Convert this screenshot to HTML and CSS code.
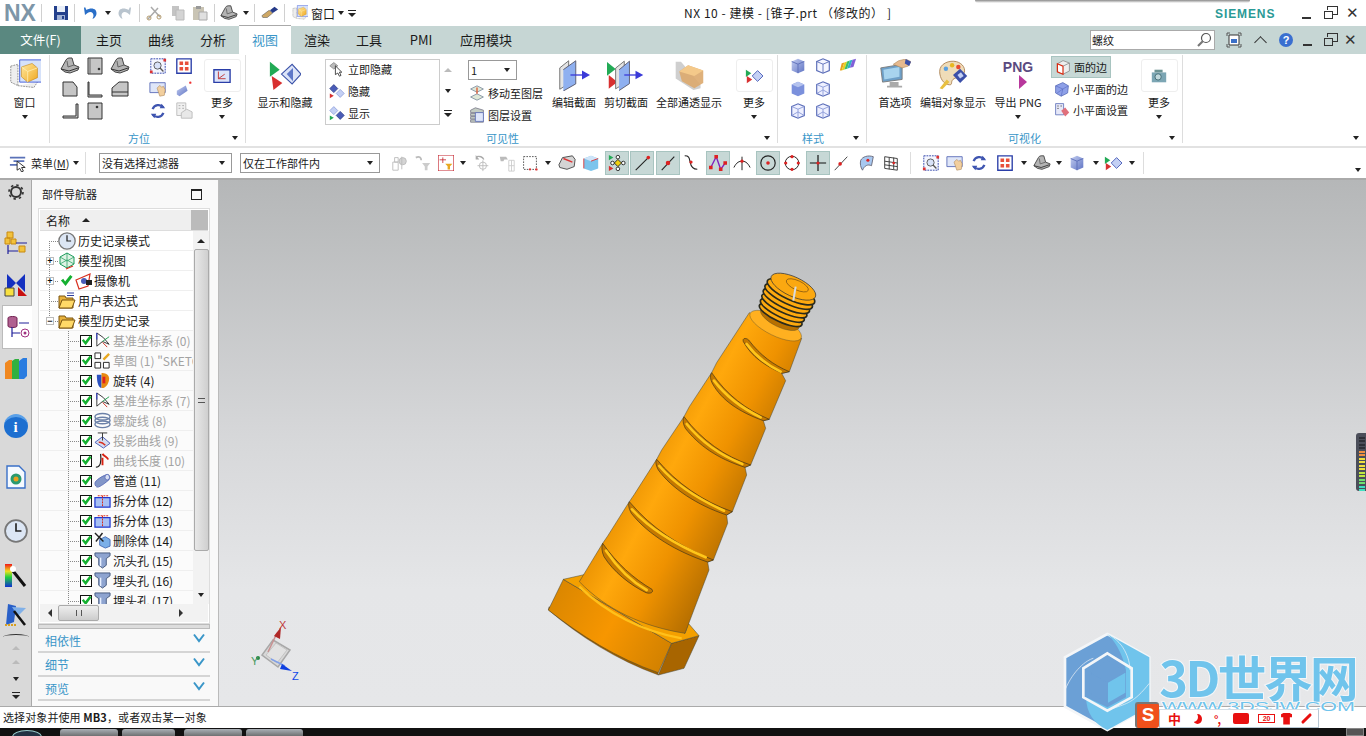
FILE: index.html
```html
<!DOCTYPE html>
<html lang="zh">
<head>
<meta charset="utf-8">
<title>NX 10 - 建模</title>
<link rel="stylesheet" href="styles.css">
</head>
<body>
<svg class="defs" width="0" height="0" aria-hidden="true">
<defs>
<linearGradient id="gb" x1="0" y1="0" x2="1" y2="1"><stop offset="0" stop-color="#c3cdf0"/><stop offset="1" stop-color="#5f74c4"/></linearGradient>
<linearGradient id="gy" x1="0" y1="0" x2="1" y2="1"><stop offset="0" stop-color="#ffe9a0"/><stop offset="1" stop-color="#f0a820"/></linearGradient>
<linearGradient id="rainbow" x1="0" y1="0" x2="0" y2="1"><stop offset="0" stop-color="#f01818"/><stop offset=".3" stop-color="#f0e020"/><stop offset=".55" stop-color="#20d040"/><stop offset="1" stop-color="#1020e0"/></linearGradient>
<symbol id="save" viewBox="0 0 16 16"><path d="M1 1h14v14H1z" fill="#24408c"/><path d="M4 1h8v6H4z" fill="#e8eef8"/><path d="M4 10h8v5H4z" fill="#9fb0d4"/><path d="M9 11h2v3H9z" fill="#24408c"/></symbol>
<symbol id="undo" viewBox="0 0 16 16"><path d="M2 3l1 7 2.500-2c3-2 6-1 6 3l-1 3c4-2 5-6 3-9-2-2-6-2-9 0L3 2z" fill="#2a6fc8"/></symbol>
<symbol id="redo" viewBox="0 0 16 16"><path d="M14 3l-1 7-2.500-2c-3-2-6-1-6 3l1 3c-4-2-5-6-3-9 2-2 6-2 9 0L13 2z" fill="#b9c4ce"/></symbol>
<symbol id="cut" viewBox="0 0 16 16"><path d="M2 14L12 3M5 2l9 10" stroke="#aaa" stroke-width="1.500"/><circle cx="3" cy="13" r="2" fill="none" stroke="#b49c70"/><circle cx="13" cy="12" r="2" fill="none" stroke="#b49c70"/></symbol>
<symbol id="copy" viewBox="0 0 16 16"><path d="M2 1h7v10H2z" fill="#c4c4c4"/><path d="M6 5h8v10H6z" fill="#d4d4d4" stroke="#bbb"/></symbol>
<symbol id="paste" viewBox="0 0 16 16"><path d="M1 2h11v13H1z" fill="#c9c4b4"/><path d="M4 1h5v3H4z" fill="#999"/><path d="M7 7h8v8H7z" fill="#e0e0e0" stroke="#aaa"/></symbol>
<symbol id="tray" viewBox="0 0 20 20"><path d="M1 13L6 4q1-2 3-2h3l2 7 5 2-1 3-8 3-5-1z" fill="#b4b4b4" stroke="#444"/><path d="M1 13l8 2 9-3" fill="none" stroke="#333"/><path d="M7 5l1 6 6-2" fill="none" stroke="#666"/></symbol>
<symbol id="brush" viewBox="0 0 20 20"><path d="M1 13l8-6 4 3-6 5-5 0z" fill="#cda765" stroke="#555" stroke-width=".6"/><path d="M10 7l5-4 4 3-6 4z" fill="#253a88"/></symbol>
<symbol id="cube" viewBox="0 0 36 36"><path d="M2 8l8-2v24l-8-4zM10 30l18 2 4-6" fill="#eee" stroke="#888" stroke-dasharray="2 1"/><path d="M12 1h25v25H12z" fill="#d6e2fa" stroke="#3a55d8"/><path d="M14 9l12-4 6 5v11l-11 5-7-6z" fill="url(#gy)" stroke="#c07a00" stroke-width=".6"/><path d="M14 9l7 5 11-4M21 14v12" stroke="#fff4c0" fill="none" stroke-width=".8"/></symbol>
<symbol id="f1" viewBox="0 0 20 20"><path d="M3 3h10l4 5v9H3z" fill="#c6c6c6" stroke="#333"/></symbol>
<symbol id="f2" viewBox="0 0 20 20"><path d="M3 2h14v16H3z" fill="#c6c6c6" stroke="#333"/><path d="M5 2v16" stroke="#666"/><circle cx="14" cy="13" r="1.300" fill="#333"/></symbol>
<symbol id="f3" viewBox="0 0 20 20"><path d="M4 3v13h13v2H3V3z" fill="#c6c6c6" stroke="#333"/></symbol>
<symbol id="f4" viewBox="0 0 20 20"><path d="M2 17V9l7-6h9v14z" fill="#c6c6c6" stroke="#333"/><path d="M2 13h16" stroke="#333"/></symbol>
<symbol id="f5" viewBox="0 0 20 20"><path d="M16 3v12H3v2h15V3z" fill="#c6c6c6" stroke="#333"/></symbol>
<symbol id="f6" viewBox="0 0 20 20"><path d="M3 2h14v16H3z" fill="#c6c6c6" stroke="#333"/><circle cx="12" cy="6" r="1.300" fill="#333"/></symbol>
<symbol id="fit" viewBox="0 0 20 20"><path d="M2 2h16v16H2z" fill="#f4f6ff" stroke="#2a3ea8" stroke-dasharray="2 1"/><circle cx="9.500" cy="9.500" r="4" fill="#d8e2f8" stroke="#555"/><path d="M12 12l4 4" stroke="#555" stroke-width="1.500"/><path d="M16 2h3v3h-3zM1 15h3v3H1z" fill="#d33"/></symbol>
<symbol id="grid4" viewBox="0 0 20 20"><path d="M2 2h16v16H2z" fill="#fff" stroke="#2a3ea8" stroke-width="1.500"/><path d="M5 5h4v4H5zM11 5h4v4h-4zM5 11h4v4H5zM11 11h4v4h-4z" fill="#e8503a"/></symbol>
<symbol id="hand" viewBox="0 0 20 20"><path d="M1 3h17v11H1z" fill="#dfe6f8" stroke="#5b6db8"/><path d="M9 9l3-3 2 2 2-1 2 4-1 6-5 1z" fill="#f2cf9e" stroke="#a98050" stroke-width=".6"/></symbol>
<symbol id="ray" viewBox="0 0 20 20"><path d="M2 12l10-6 2 6-9 6-3-2z" fill="url(#gb)"/><circle cx="17" cy="3" r="1.300" fill="#e33"/></symbol>
<symbol id="rot" viewBox="0 0 20 20"><path d="M16 6A7 7 0 0 0 4 8M4 14a7 7 0 0 0 12-2" fill="none" stroke="#3f55b0" stroke-width="2.500"/><path d="M14 2l4 5-6 0zM6 18l-4-5 6 0z" fill="#3f55b0"/></symbol>
<symbol id="sheet" viewBox="0 0 20 20"><path d="M2 1h10v14H2z" fill="#f0f0f0" stroke="#bbb"/><path d="M7 12l6-4 6 3v7H7z" fill="#e8e8e8" stroke="#bbb"/><path d="M4 4h2M8 4h2M4 7h2M8 7h2" stroke="#aaa"/></symbol>
<symbol id="wcs" viewBox="0 0 20 20"><path d="M1 3h18v14H1z" fill="#dce4fa" stroke="#2a3ea8" stroke-width="1.500"/><path d="M6 5v8h8M6 13l7-5" stroke="#c03030" fill="none"/></symbol>
<symbol id="showhide" viewBox="0 0 36 36"><path d="M1 3l11 9-11 8z" fill="#22aa55"/><path d="M3 19l12 8-10 8z" fill="#d83030"/><path d="M14 17L26 6l10 11-10 11z" fill="#dce4f8" stroke="#3b52a8" stroke-width="1.200"/><path d="M20 17l7-7v15z" fill="#5f78c8"/></symbol>
<symbol id="hidenow" viewBox="0 0 20 20"><path d="M1 6l5-4 5 4-5 4z" fill="#bbb" stroke="#888"/><path d="M8 6l8 8-3 0 2 4-2 1-2-4-3 2z" fill="#fff" stroke="#222"/></symbol>
<symbol id="hide" viewBox="0 0 20 20"><path d="M1 7l5-5 5 5-5 5z" fill="#4a5cb8" stroke="#34448c"/><path d="M9 13l5-5 5 5-5 5z" fill="#c4d0f4" stroke="#8fa0dc"/><path d="M1 13l5 3-5 3z" fill="#d83030"/></symbol>
<symbol id="show" viewBox="0 0 20 20"><path d="M1 7l5-5 5 5-5 5z" fill="#c4d0f4" stroke="#8fa0dc"/><path d="M9 13l5-5 5 5-5 5z" fill="#4a5cb8" stroke="#34448c"/><path d="M1 13l5 3-5 3z" fill="#22aa55"/></symbol>
<symbol id="layer" viewBox="0 0 20 20"><path d="M10 1l8 4-8 4-8-4z" fill="#dfe8d8" stroke="#789"/><path d="M10 11l8 4-8 4-8-4z" fill="#dfe8d8" stroke="#789"/><path d="M10 3v8" stroke="#e04a20" stroke-width="1.500"/></symbol>
<symbol id="layerset" viewBox="0 0 20 20"><path d="M2 4l6-3 10 3v3H2zM2 8h16v3H2zM2 12h16v3H2zM2 16h16v3H2z" fill="#c4ccc4" stroke="#778"/><path d="M8 7h10v11H8z" fill="#dfe6fa" stroke="#5b6db8"/></symbol>
<symbol id="sect" viewBox="0 0 36 36"><path d="M2 10l10-8v26L2 34z" fill="#e4e4e4" stroke="#666"/><path d="M6 12l14-10v26L6 36" fill="#8fb0f0" stroke="#556"/><path d="M14 18h14" stroke="#3a3ad8" stroke-width="1.500"/><path d="M27 13l9 5-9 5z" fill="#3a3ad8"/></symbol>
<symbol id="sectcut" viewBox="0 0 44 36"><path d="M0 3l10 8-10 8z" fill="#22aa55"/><path d="M2 18l10 8-10 8z" fill="#d83030"/><path d="M10 10l10-8v26l-10 6z" fill="#e4e4e4" stroke="#666"/><path d="M14 12l12-10v26l-12 8" fill="#8fb0f0" stroke="#556"/><path d="M20 18h14" stroke="#3a3ad8" stroke-width="1.500"/><path d="M33 13l9 5-9 5z" fill="#3a3ad8"/></symbol>
<symbol id="xray" viewBox="0 0 36 36"><path d="M3 3h6l22 26v4l-8 2L3 22z" fill="#cfcfcf"/><path d="M7 14l10-7 17 6v14l-10 6-14-8z" fill="#dca96d" opacity=".9"/><path d="M17 7l17 6-10 6-17-5z" fill="#f4c98a"/></symbol>
<symbol id="more1" viewBox="0 0 20 20"><path d="M1 3l6 4-6 4z" fill="#22aa55"/><path d="M2 10l6 4-6 4z" fill="#d83030"/><path d="M8 10l6-6 6 6-6 6z" fill="#c4d0f4" stroke="#4a5cb8"/></symbol>
<symbol id="sh1" viewBox="0 0 20 20"><path d="M3 5l7-3 7 3v10l-7 3-7-3z" fill="url(#gb)"/><path d="M3 5l7 3 7-3M10 8v10" stroke="#5b6db8" fill="none"/></symbol>
<symbol id="sh2" viewBox="0 0 20 20"><path d="M3 5l7-3 7 3v10l-7 3-7-3z" fill="#f5f6ff" stroke="#5b6db8" stroke-width="1.300"/><path d="M3 5l7 3 7-3M10 8v10" stroke="#5b6db8" fill="none"/></symbol>
<symbol id="sh3" viewBox="0 0 20 20"><path d="M3 7l3-1-3 9-2 0z" fill="#e8a020"/><path d="M6 6l3-1-3 9-3 1z" fill="#e8d020"/><path d="M9 5l3-1-3 9-3 1z" fill="#40c060"/><path d="M12 4l3-1-3 9-3 1z" fill="#30b0c8"/><path d="M15 3l4-1-3 9-4 1z" fill="#8060d8"/></symbol>
<symbol id="sh4" viewBox="0 0 20 20"><path d="M3 5l7-3 7 3v10l-7 3-7-3z" fill="#7b90dc"/><path d="M3 5l7 3 7-3-7-3z" fill="#b4c2ee"/></symbol>
<symbol id="sh5" viewBox="0 0 20 20"><path d="M3 5l7-3 7 3v10l-7 3-7-3z" fill="#eef0ff" stroke="#5b6db8" stroke-width="1.300"/><path d="M3 5l7 3 7-3M10 8v10M3 15l7-4 7 4" stroke="#8a9ad8" fill="none"/></symbol>
<symbol id="pref" viewBox="0 0 36 36"><path d="M2 10l24-4v17L4 26z" fill="#6ea0c8" stroke="#777"/><path d="M5 12l18-3v11L6 23z" fill="#a8d4ee"/><path d="M12 26h10v4h4v2H9v-2h3z" fill="#aaa"/><path d="M16 6l6-4 8-2 6 3-3 5-7 2z" fill="#e6b98e" stroke="#a98050" stroke-width=".6"/><path d="M30 0l6 3-2 5-5-3z" fill="#3b4fa8"/></symbol>
<symbol id="palette" viewBox="0 0 36 36"><path d="M3 14C3 5 14 1 22 3c7 2 11 8 8 14-3 5-9 3-12 6-3 3 0 6-4 6-6 0-11-7-11-15z" fill="#efdcb8" stroke="#a98050"/><circle cx="10" cy="11" r="2.500" fill="#5aa0e0"/><circle cx="17" cy="7" r="2.500" fill="#e8b820"/><circle cx="24" cy="9" r="2.500" fill="#e84a30"/><path d="M18 18l8-7 8 8-8 8z" fill="#3b4fa8"/><path d="M23 18l4-3 3 4-4 3z" fill="#c4d0f4"/><path d="M3 33l8-10 3 3-8 8z" fill="#e8c040"/></symbol>
<symbol id="face" viewBox="0 0 20 20"><path d="M3 6l7-4 8 3v10l-8 4-7-3z" fill="#eee" stroke="#888"/><path d="M3 6l7 3v10l-7-3z" fill="#fff" stroke="#d82a10" stroke-width="1.500"/><path d="M10 9l8-4" stroke="#888"/></symbol>
<symbol id="facet" viewBox="0 0 20 20"><path d="M2 6l9-4 7 4-1 9-8 4-7-4z" fill="#8ea0e8" stroke="#5b6db8"/><path d="M2 6l9 4 7-4M11 10l-2 9M11 10L4 15" stroke="#4a5cb8" fill="none" stroke-width=".6"/></symbol>
<symbol id="facetset" viewBox="0 0 20 20"><path d="M2 2h10v14H2z" fill="#e6e8f8" stroke="#5b6db8"/><path d="M4 5h2M8 5h2M4 8h2" stroke="#555"/><path d="M9 11l5-4 5 6-5 5z" fill="#e0707c"/></symbol>
<symbol id="cam" viewBox="0 0 20 20"><path d="M2 6h16v11H2z" fill="#7ca6b4"/><path d="M5 3h9v3H5z" fill="#6b9292"/><circle cx="9" cy="11" r="3.500" fill="#c0d8dc" stroke="#3e6870"/></symbol>
<symbol id="bar" viewBox="0 0 20 20"><path d="M1 3h17v2H1zM5 7h12v2H5zM1 11h9v2H1z" fill="#5a72b8"/><path d="M9 8l9 7-4 0 2 4-2 1-2-4-3 2z" fill="#fff" stroke="#222"/></symbol>
<symbol id="qsnap" viewBox="0 0 20 20"><path d="M2 9h6v9H2z M4 4h4v5H4z" fill="none" stroke="#bbb"/><circle cx="13" cy="8" r="4" fill="#d4d4d4" stroke="#bbb"/><path d="M12 3v14" stroke="#bbb"/></symbol>
<symbol id="filt" viewBox="0 0 20 20"><path d="M2 4c4-2 6 0 6 3" stroke="#bbb" stroke-width="2" fill="none"/><path d="M9 10h9l-3 4v4h-3v-4z" fill="#ccc"/></symbol>
<symbol id="selbox" viewBox="0 0 20 20"><path d="M0 0h20v20H0z" fill="#fff" stroke="#c4202a" stroke-width="1.500"/><path d="M6 3v7M2 6h8" stroke="#c4202a"/><path d="M9 11h9l-3 3v4h-3v-4z" fill="#e8a820"/></symbol>
<symbol id="rotsnap" viewBox="0 0 20 20"><path d="M4 3a6 5 0 0 1 8 3" stroke="#aaa" fill="none" stroke-width="1.500"/><path d="M3 1v5h4z" fill="#aaa"/><circle cx="11" cy="13" r="4" fill="none" stroke="#bbb"/><path d="M11 7v12M5 13h12" stroke="#bbb"/></symbol>
<symbol id="gears" viewBox="0 0 20 20"><path d="M2 3h7l2 3H7l-1 2H3z" fill="#bbb"/><path d="M12 7h6v12h-6z" fill="none" stroke="#ccc"/><path d="M12 13h6M15 7v12" stroke="#ccc"/></symbol>
<symbol id="rect" viewBox="0 0 20 20"><path d="M2 2h16v16H2z" fill="#fff" stroke="#333" stroke-dasharray="2 1.500"/><circle cx="18" cy="18" r="1.500" fill="#d33"/><circle cx="10" cy="18" r="1.300" fill="#d33"/></symbol>
<symbol id="body1" viewBox="0 0 20 20"><path d="M1 12l4-8 11-2 3 4-1 8-8 3-8-2z" fill="#d4d4d4" stroke="#444"/><path d="M6 5l10 4" stroke="#d33" stroke-width="1.500"/></symbol>
<symbol id="body2" viewBox="0 0 20 20"><path d="M2 5l8-3 8 3v11l-8 3-8-3z" fill="#7cc4ec"/><path d="M2 5l8-3 8 3-8 3z" fill="#cfe4f8"/><path d="M2 5v11" stroke="#d33"/><path d="M10 8l8-3" stroke="#d33"/></symbol>
<symbol id="sn-mid" viewBox="0 0 20 20"><path d="M1 1l5 3-5 3z" fill="#22aa55"/><path d="M1 13l5 3-5 3z" fill="#d83030"/><circle cx="11" cy="3.500" r="2" fill="#fff" stroke="#222"/><circle cx="11" cy="16.500" r="2" fill="#fff" stroke="#222"/><circle cx="5" cy="10" r="2" fill="#fff" stroke="#222"/><circle cx="17" cy="10" r="2" fill="#fff" stroke="#222"/><path d="M11 6l4 4-4 4-4-4z" fill="#f0d010" stroke="#222"/></symbol>
<symbol id="sn-end" viewBox="0 0 20 20"><path d="M3 18L17 4" stroke="#222" stroke-width="1.200"/><circle cx="17" cy="4" r="2" fill="#d22"/></symbol>
<symbol id="sn-midp" viewBox="0 0 20 20"><path d="M3 18L17 3" stroke="#222" stroke-width="1.200"/><circle cx="10" cy="10" r="2.500" fill="#d22"/></symbol>
<symbol id="sn-curve" viewBox="0 0 20 20"><path d="M3 2c5 0 5 2 6 7s3 8 8 8" fill="none" stroke="#222" stroke-width="1.200"/><circle cx="10" cy="9" r="1.800" fill="#d22"/></symbol>
<symbol id="sn-pole" viewBox="0 0 20 20"><path d="M2 15L8 3l5 14 5-7" fill="none" stroke="#8020c0" stroke-width="1.500"/><path d="M0 13h4v4H0zM6 1h4v4H6zM11 15h4v4h-4zM16 8h4v4h-4z" fill="#d22"/></symbol>
<symbol id="sn-int" viewBox="0 0 20 20"><path d="M1 15c3-6 6-7 9-7s6 1 9 7M10 3v15" fill="none" stroke="#222" stroke-width="1.100"/><circle cx="10" cy="8" r="1.800" fill="#d22"/></symbol>
<symbol id="sn-cen" viewBox="0 0 20 20"><circle cx="10" cy="10" r="8" fill="none" stroke="#222" stroke-width="1.300"/><circle cx="10" cy="10" r="2" fill="#d22"/></symbol>
<symbol id="sn-quad" viewBox="0 0 20 20"><circle cx="10" cy="10" r="7.500" fill="none" stroke="#222" stroke-width="1.100"/><circle cx="10" cy="3" r="1.800" fill="#d22"/><circle cx="10" cy="17" r="1.800" fill="#d22"/><circle cx="3" cy="10" r="1.800" fill="#d22"/><circle cx="17" cy="10" r="1.800" fill="#d22"/></symbol>
<symbol id="sn-ex" viewBox="0 0 20 20"><path d="M1 10h18M10 1v18" stroke="#111" stroke-width="1.300"/><circle cx="10" cy="10" r="1.800" fill="#d22"/></symbol>
<symbol id="sn-on" viewBox="0 0 20 20"><path d="M3 18L17 3" stroke="#333"/><circle cx="9" cy="11" r="2" fill="#d22"/></symbol>
<symbol id="sn-face" viewBox="0 0 20 20"><path d="M3 7c2-4 8-6 14-4l-2 10c-4-2-8 0-10 5-2-3-3-7-2-11z" fill="#a8c8f0" stroke="#667"/><circle cx="11" cy="7" r="1.700" fill="#d22"/></symbol>
<symbol id="sn-grid" viewBox="0 0 20 20"><path d="M3 3l14 2v13L3 16zM8 4v13M13 4v13M3 8l14 2M3 12l14 2" fill="none" stroke="#333"/><circle cx="13" cy="10" r="1.500" fill="#d22"/></symbol>
<symbol id="search" viewBox="0 0 16 16"><circle cx="10" cy="6" r="4.500" fill="#fff" stroke="#555" stroke-width="1.200"/><path d="M7 9l-5 5" stroke="#777" stroke-width="2.200"/></symbol>
<symbol id="screen" viewBox="0 0 16 16"><path d="M1 4V1h3M12 1h3v3M15 12v3h-3M4 15H1v-3" fill="none" stroke="#555"/><path d="M3 3h10v10H3z" fill="#fff" stroke="#333"/><path d="M5 7h6v4H5z" fill="#3a70c8"/></symbol>
<symbol id="folder" viewBox="0 0 18 18"><path d="M1 4h6l1 2h7v10H1z" fill="#e8b23c" stroke="#7a5510"/><path d="M1 16l3-8h13l-3 8z" fill="#ffd968" stroke="#7a5510"/></symbol>
<symbol id="exprfolder" viewBox="0 0 18 18"><path d="M1 4h6l1 2h7v10H1z" fill="#e8b23c" stroke="#7a5510"/><path d="M1 16l3-8h13l-3 8z" fill="#ffd968" stroke="#7a5510"/><path d="M9 1h7M9 3.500h7" stroke="#3040a0"/></symbol>
<symbol id="clock" viewBox="0 0 22 22"><circle cx="11" cy="11" r="10" fill="#dce6f4" stroke="#777" stroke-width="1.600"/><path d="M11 4v7h5" fill="none" stroke="#222" stroke-width="1.500"/></symbol>
<symbol id="mview" viewBox="0 0 18 18"><path d="M9 1l7 4v7l-7 4-7-4V5z" fill="#dff3e4" stroke="#1a9a5a"/><path d="M2 5l7 4 7-4M9 9v7M2 12l7-4 7 4M9 1v7" stroke="#1a9a5a" fill="none" stroke-width=".7"/><path d="M8 17l7-3" stroke="#e03020" stroke-width="1.300"/></symbol>
<symbol id="tick" viewBox="0 0 14 14"><path d="M1 7l2.500-2 2 3L11 1l2.500 2L6 13z" fill="#14b030"/></symbol>
<symbol id="camera" viewBox="0 0 18 18"><path d="M1 8l14-6-2 12-9 3z" fill="#fff" stroke="#d83020" stroke-width="1.200"/><circle cx="9" cy="9" r="3" fill="#4a5cb8"/><path d="M11 8h6v5h-6z" fill="#222"/></symbol>
<symbol id="csys" viewBox="0 0 18 18"><path d="M3 1v14l6-5 7 3-6-7z" fill="#fff" stroke="#333"/><path d="M3 1v7" stroke="#2030d0"/><path d="M9 10l7-5" stroke="#22a050"/><path d="M9 11l5 5" stroke="#d03020"/></symbol>
<symbol id="sketch" viewBox="0 0 18 18"><path d="M1 1h6v6H1zM1 11h6v6H1zM10 11h6v6h-6z" fill="#fff" stroke="#222"/><path d="M10 8l6-6" stroke="#e8a820" stroke-width="2.500"/></symbol>
<symbol id="rev" viewBox="0 0 18 18"><path d="M3 3h5v14C5 17 3 12 3 3z" fill="#2a50c0"/><path d="M8 1c3 0 8 1 8 6s-3 9-6 10H8z" fill="#e88a10"/><path d="M9 5h3v7H9z" fill="#e02020"/></symbol>
<symbol id="helix" viewBox="0 0 18 18"><ellipse cx="9" cy="5" rx="8" ry="3.500" fill="none" stroke="#6b80a8" stroke-width="1.500"/><ellipse cx="9" cy="9" rx="8" ry="3.500" fill="none" stroke="#6b80a8" stroke-width="1.500"/><ellipse cx="9" cy="13" rx="8" ry="3.500" fill="none" stroke="#6b80a8" stroke-width="1.500"/></symbol>
<symbol id="proj" viewBox="0 0 18 18"><path d="M1 11l8-6 8 7-7 5z" fill="#d4dcf0" stroke="#4a5cb8"/><path d="M4 1h10M9 1v8" stroke="#333"/><path d="M5 11c3-1 5 1 7 3" stroke="#d83020" fill="none" stroke-width="1.500"/></symbol>
<symbol id="clen" viewBox="0 0 18 18"><path d="M2 16c5 0 6-6 5-14" stroke="#222" fill="none" stroke-width="1.300"/><path d="M9 2c2 3 5 3 6 6M9 6v8" stroke="#d82010" stroke-width="2" fill="none"/></symbol>
<symbol id="tube" viewBox="0 0 18 18"><path d="M1 12c0-3 8-8 12-9 3-1 5 3 3 5-3 3-10 8-12 8-2 0-3-2-3-4z" fill="#8296c8" stroke="#5b6db8"/><ellipse cx="14" cy="5.500" rx="2.500" ry="3" fill="#d8e0f4" stroke="#5b6db8"/></symbol>
<symbol id="split" viewBox="0 0 18 18"><path d="M1 6h16v10H1z" fill="#a8c0f4" stroke="#2038d0" stroke-width="1.300"/><path d="M4 4h11M9 4v12" stroke="#d82010" stroke-dasharray="2 1"/></symbol>
<symbol id="del" viewBox="0 0 18 18"><path d="M6 8l6-3 5 3v7l-5 2-6-3z" fill="#7cb0e8" stroke="#4a70b8"/><path d="M1 1l9 9M9 1L2 10" stroke="#222" stroke-width="1.500"/></symbol>
<symbol id="hole" viewBox="0 0 18 18"><path d="M1 1h16v3l-4 3v7l-4 3-4-3V7L1 4z" fill="#8ea4d0" stroke="#44587c"/><path d="M7 6v9" stroke="#e8f0ff" stroke-width="1.500"/></symbol>
<symbol id="gear" viewBox="0 0 16 16"><circle cx="8" cy="8" r="5" fill="none" stroke="#333" stroke-width="2"/><circle cx="8" cy="8" r="7" fill="none" stroke="#333" stroke-width="1.600" stroke-dasharray="2.500 3"/></symbol>
<symbol id="asm" viewBox="0 0 24 24"><path d="M3 1h6v6H3zM1 7h5v6H1zM7 8h5v5H7zM15 15h6v6h-6z" fill="#f2c23c" stroke="#c88a10"/><path d="M12 12h11M4 14v9M4 20h10" stroke="#20209a" stroke-width="1.200"/></symbol>
<symbol id="cons" viewBox="0 0 24 24"><path d="M3 1l9 9 9-9v18l-9-9-9 9z" fill="#1430c0"/><path d="M1 15h9v8H1z" fill="#f8e040" stroke="#444"/><path d="M14 23l0-9 9 9z" fill="#c81010"/></symbol>
<symbol id="pnav" viewBox="0 0 24 24"><path d="M1 3c0-2 9-2 9 0v8c0 2-9 2-9 0z" fill="#b06090" stroke="#702050"/><path d="M12 8h10M5 12v10M5 18h8" stroke="#20209a" stroke-width="1.200"/><circle cx="18" cy="18" r="4" fill="none" stroke="#a03080"/><circle cx="18" cy="18" r="1.500" fill="#a03080"/></symbol>
<symbol id="books" viewBox="0 0 24 24"><path d="M1 6l4-3h3v19H1z" fill="#f08820"/><path d="M8 4l3-2h4v20H8z" fill="#30b040"/><path d="M15 4l4-3h4v18l-3 3h-5z" fill="#2a7ce0"/></symbol>
<symbol id="page" viewBox="0 0 20 24"><path d="M1 1h12l6 6v16H1z" fill="#f6faff" stroke="#3a70c8" stroke-width="1.400"/><circle cx="10" cy="14" r="5.500" fill="#2a9a70"/><circle cx="10" cy="14" r="2.500" fill="#e8a020"/></symbol>
<symbol id="wand" viewBox="0 0 24 24"><path d="M1 1h7v24H1z" fill="url(#rainbow)"/><path d="M9 8l12 15" stroke="#111" stroke-width="3"/><circle cx="9" cy="6" r="3" fill="#fff"/></symbol>
<symbol id="tool" viewBox="0 0 24 24"><path d="M4 1l8 2-2 16-8 3z" fill="#2a60c8"/><path d="M8 4l14 1-8 8z" fill="#80b0e8"/><path d="M10 8l11 14" stroke="#111" stroke-width="2.500"/><path d="M1 22h12" stroke="#d8a020" stroke-width="2" stroke-dasharray="2 1"/></symbol>
<symbol id="chev" viewBox="0 0 12 10"><path d="M1 1.500l5 6.500 5-6.500" fill="none" stroke="#3a96c8" stroke-width="2"/></symbol>
</defs>
</svg>

<div class="app">
  <header class="titlebar">
    <div class="qat">
      <span class="nx">NX</span><i class="qsep nxsep"></i>
      <svg class="i16 m-a"><use href="#save"/></svg><i class="qsep s1"></i>
      <svg class="i16 m-b"><use href="#undo"/></svg><i class="dn m-c"></i>
      <svg class="i16 m-d"><use href="#redo"/></svg><i class="qsep s2"></i>
      <svg class="i16 m-e"><use href="#cut"/></svg>
      <svg class="i16 m-f"><use href="#copy"/></svg>
      <svg class="i16 m-g"><use href="#paste"/></svg><i class="qsep s3"></i>
      <svg class="i18 m-h"><use href="#tray"/></svg><i class="dn m-i"></i><i class="qsep s4"></i>
      <svg class="i18 m-j"><use href="#brush"/></svg><i class="qsep s5"></i>
      <svg class="i16 m-k"><use href="#cube"/></svg>
      <span class="qtext">窗口</span><i class="dn m-l"></i><i class="more-dn m-m"></i>
    </div>
    <div class="doc-title">NX 10 - 建模 - [锥子.prt （修改的） ]</div>
    <div class="brand">SIEMENS</div>
    <div class="winbtns">
      <i class="w-min"></i><i class="w-rest"></i><span class="w-x">✕</span>
    </div>
  </header>

  <nav class="tabs">
    <span class="tab file">文件(F)</span>
    <span class="tab first">主页</span><span class="tab">曲线</span><span class="tab">分析</span>
    <span class="tab on">视图</span><span class="tab">渲染</span><span class="tab">工具</span>
    <span class="tab">PMI</span><span class="tab">应用模块</span>
    <div class="tabs-right">
      <div class="search"><span>螺纹</span><svg class="i16"><use href="#search"/></svg></div>
      <svg class="i16 tr-a"><use href="#screen"/></svg>
      <span class="tr-chev"></span>
      <span class="help">?</span>
      <i class="w-min"></i><i class="w-rest"></i><span class="w-x">✕</span>
    </div>
  </nav>

  <section class="ribbon">
    <div class="grp g1">
      <div class="body">
        <div class="big w49"><svg class="i32"><use href="#cube"/></svg><span>窗口</span><i class="dn"></i></div>
      </div>
    </div>
    <div class="grp g2">
      <div class="body">
        <div class="grid c25">
          <svg class="i20"><use href="#tray"/></svg><svg class="i20"><use href="#f2"/></svg><svg class="i20"><use href="#tray"/></svg>
          <svg class="i20"><use href="#f1"/></svg><svg class="i20"><use href="#f3"/></svg><svg class="i20"><use href="#f4"/></svg>
          <svg class="i20"><use href="#f5"/></svg><svg class="i20"><use href="#f6"/></svg>
        </div>
        <div class="grid c26">
          <svg class="i18"><use href="#fit"/></svg><svg class="i18"><use href="#grid4"/></svg>
          <svg class="i18"><use href="#hand"/></svg><svg class="i18"><use href="#ray"/></svg>
          <svg class="i18"><use href="#rot"/></svg><svg class="i18"><use href="#sheet"/></svg>
        </div>
        <div class="big w40 ml5"><div class="morebox"><svg class="i18"><use href="#wcs"/></svg></div><span>更多</span><i class="dn"></i></div>
      </div>
      <div class="foot foot-o">方位<i class="dn"></i></div>
    </div>
    <div class="grp g3">
      <div class="body">
        <div class="big w60"><svg class="i32"><use href="#showhide"/></svg><span>显示和隐藏</span></div>
        <div class="listbox">
          <div class="li"><svg class="i16"><use href="#hidenow"/></svg>立即隐藏</div>
          <div class="li"><svg class="i16"><use href="#hide"/></svg>隐藏</div>
          <div class="li"><svg class="i16"><use href="#show"/></svg>显示</div>
        </div>
        <div class="lscroll"><i class="up"></i><i class="dn"></i><i class="more-dn"></i></div>
        <div class="layers">
          <div class="combo small"><span>1</span><i class="dn"></i></div>
          <div class="li"><svg class="i16"><use href="#layer"/></svg>移动至图层</div>
          <div class="li"><svg class="i16"><use href="#layerset"/></svg>图层设置</div>
        </div>
        <div class="big w52"><svg class="i32"><use href="#sect"/></svg><span>编辑截面</span></div>
        <div class="big w52"><svg class="i32w"><use href="#sectcut"/></svg><span>剪切截面</span></div>
        <div class="big w74"><svg class="i32"><use href="#xray"/></svg><span>全部通透显示</span></div>
        <div class="big w40 ml8"><div class="morebox"><svg class="i18"><use href="#more1"/></svg></div><span>更多</span><i class="dn"></i></div>
      </div>
      <div class="foot foot-v">可见性<i class="dn"></i></div>
    </div>
    <div class="grp g4">
      <div class="body">
        <div class="grid c25">
          <svg class="i18"><use href="#sh1"/></svg><svg class="i18"><use href="#sh2"/></svg><svg class="i18"><use href="#sh3"/></svg>
          <svg class="i18"><use href="#sh4"/></svg><svg class="i18"><use href="#sh5"/></svg><span></span>
          <svg class="i18"><use href="#sh5"/></svg><svg class="i18"><use href="#sh5"/></svg>
        </div>
      </div>
      <div class="foot foot-s">样式<i class="dn"></i></div>
    </div>
    <div class="grp g5">
      <div class="body">
        <div class="big w40"><svg class="i32"><use href="#pref"/></svg><span>首选项</span></div>
        <div class="big w74 ml1"><svg class="i32"><use href="#palette"/></svg><span>编辑对象显示</span></div>
        <div class="big w52 ml2"><div class="png"><b>PNG</b><i class="png-arrow"></i></div><span>导出 PNG</span><i class="dn"></i></div>
        <div class="vlist">
          <div class="li act"><svg class="i16"><use href="#face"/></svg>面的边</div>
          <div class="li"><svg class="i16"><use href="#facet"/></svg>小平面的边</div>
          <div class="li"><svg class="i16"><use href="#facetset"/></svg>小平面设置</div>
        </div>
        <div class="big w40 ml3"><div class="morebox"><svg class="i18"><use href="#cam"/></svg></div><span>更多</span><i class="dn"></i></div>
      </div>
      <div class="foot">可视化<i class="dn"></i></div>
    </div>
    <div class="grp g6"><div class="body"></div><div class="foot"><i class="dn"></i></div></div>
  </section>

  <section class="toolbar">
    <svg class="i18 menu-ic"><use href="#bar"/></svg><span class="menu">菜单(<u>M</u>)</span><i class="dn"></i><i class="tsep t1"></i>
    <div class="combo c1"><span>没有选择过滤器</span><i class="dn"></i></div>
    <div class="combo c2"><span>仅在工作部件内</span><i class="dn"></i></div>
    <span class="tb g7"><svg class="i18"><use href="#qsnap"/></svg></span>
    <span class="tb gn1"><svg class="i18"><use href="#filt"/></svg></span>
    <span class="tb gn1"><svg class="i16"><use href="#selbox"/></svg></span><i class="dn g1h"></i>
    <span class="tb g4h"><svg class="i18"><use href="#rotsnap"/></svg></span>
    <span class="tb g1p"><svg class="i18"><use href="#gears"/></svg></span>
    <span class="tb gn1"><svg class="i16"><use href="#rect"/></svg></span><i class="dn g2h"></i>
    <span class="tb g4h"><svg class="i18"><use href="#body1"/></svg></span>
    <span class="tb"><svg class="i18"><use href="#body2"/></svg></span>
    <span class="tb on g2p"><svg class="i18"><use href="#sn-mid"/></svg></span>
    <span class="tb on g1p"><svg class="i18"><use href="#sn-end"/></svg></span>
    <span class="tb on g2p"><svg class="i18"><use href="#sn-midp"/></svg></span>
    <span class="tb gn1"><svg class="i18"><use href="#sn-curve"/></svg></span>
    <span class="tb on g3p"><svg class="i18"><use href="#sn-pole"/></svg></span>
    <span class="tb"><svg class="i18"><use href="#sn-int"/></svg></span>
    <span class="tb on g2p"><svg class="i18"><use href="#sn-cen"/></svg></span>
    <span class="tb"><svg class="i18"><use href="#sn-quad"/></svg></span>
    <span class="tb on g2p"><svg class="i18"><use href="#sn-ex"/></svg></span>
    <span class="tb gn1"><svg class="i18"><use href="#sn-on"/></svg></span>
    <span class="tb g2p"><svg class="i18"><use href="#sn-face"/></svg></span>
    <span class="tb"><svg class="i18"><use href="#sn-grid"/></svg></span>
    <i class="tsep t2"></i>
    <span class="tb"><svg class="i18"><use href="#fit"/></svg></span>
    <span class="tb"><svg class="i18"><use href="#hand"/></svg></span>
    <span class="tb"><svg class="i18"><use href="#rot"/></svg></span>
    <span class="tb g2p"><svg class="i18"><use href="#grid4"/></svg></span><i class="dn g3h"></i>
    <span class="tb g3h"><svg class="i18"><use href="#tray"/></svg></span><i class="dn g1h"></i>
    <span class="tb g3h"><svg class="i18"><use href="#sh1"/></svg></span><i class="dn g3h"></i>
    <span class="tb g2h"><svg class="i18"><use href="#more1"/></svg></span><i class="dn g3h"></i>
    <i class="tsep t3"></i>
    <i class="dn t-end"></i>
  </section>

  <main class="main">
    <aside class="rail">
      <svg class="i16 r-gear"><use href="#gear"/></svg>
      <svg class="i24 r-a"><use href="#asm"/></svg>
      <svg class="i24 r-b"><use href="#cons"/></svg>
      <div class="r-active"><svg class="i24"><use href="#pnav"/></svg></div>
      <svg class="i24 r-c"><use href="#books"/></svg>
      <div class="r-info"><span>i</span></div>
      <svg class="i24 r-d"><use href="#page"/></svg>
      <svg class="i24 r-e"><use href="#clock"/></svg>
      <svg class="i24 r-f"><use href="#wand"/></svg>
      <svg class="i24 r-g"><use href="#tool"/></svg>
      <i class="r-wave"></i>
      <i class="up r-u1"></i><i class="up r-u2"></i><i class="dn r-d1"></i><i class="more-dn r-d2"></i>
    </aside>
    <section class="nav">
      <div class="nav-head"><span>部件导航器</span><i class="maxbox"></i></div>
      <div class="frame">
        <div class="colhead"><span class="cname">名称</span><i class="sort"></i><i class="cend"></i></div>
        <div class="treewrap">
          <div class="tree">
            <div class="row"><span class="lead top"></span><svg class="ic"><use href="#clock"/></svg><span class="t">历史记录模式</span></div>
            <div class="row"><span class="lead"><b class="tw">+</b></span><svg class="ic"><use href="#mview"/></svg><span class="t">模型视图</span></div>
            <div class="row"><span class="lead"><b class="tw">+</b></span><svg class="ck0"><use href="#tick"/></svg><svg class="ic"><use href="#camera"/></svg><span class="t">摄像机</span></div>
            <div class="row"><span class="lead"></span><svg class="ic"><use href="#exprfolder"/></svg><span class="t">用户表达式</span></div>
            <div class="row"><span class="lead end"><b class="tw">−</b></span><svg class="ic"><use href="#folder"/></svg><span class="t">模型历史记录</span></div>
            <div class="row"><span class="lead2"></span><span class="ck"><svg><use href="#tick"/></svg></span><svg class="ic2"><use href="#csys"/></svg><span class="t dim">基准坐标系 (0)</span></div>
            <div class="row"><span class="lead2"></span><span class="ck"><svg><use href="#tick"/></svg></span><svg class="ic2"><use href="#sketch"/></svg><span class="t dim">草图 (1) "SKETCH_000"</span></div>
            <div class="row"><span class="lead2"></span><span class="ck"><svg><use href="#tick"/></svg></span><svg class="ic2"><use href="#rev"/></svg><span class="t">旋转 (4)</span></div>
            <div class="row"><span class="lead2"></span><span class="ck"><svg><use href="#tick"/></svg></span><svg class="ic2"><use href="#csys"/></svg><span class="t dim">基准坐标系 (7)</span></div>
            <div class="row"><span class="lead2"></span><span class="ck"><svg><use href="#tick"/></svg></span><svg class="ic2"><use href="#helix"/></svg><span class="t dim">螺旋线 (8)</span></div>
            <div class="row"><span class="lead2"></span><span class="ck"><svg><use href="#tick"/></svg></span><svg class="ic2"><use href="#proj"/></svg><span class="t dim">投影曲线 (9)</span></div>
            <div class="row"><span class="lead2"></span><span class="ck"><svg><use href="#tick"/></svg></span><svg class="ic2"><use href="#clen"/></svg><span class="t dim">曲线长度 (10)</span></div>
            <div class="row"><span class="lead2"></span><span class="ck"><svg><use href="#tick"/></svg></span><svg class="ic2"><use href="#tube"/></svg><span class="t">管道 (11)</span></div>
            <div class="row"><span class="lead2"></span><span class="ck"><svg><use href="#tick"/></svg></span><svg class="ic2"><use href="#split"/></svg><span class="t">拆分体 (12)</span></div>
            <div class="row"><span class="lead2"></span><span class="ck"><svg><use href="#tick"/></svg></span><svg class="ic2"><use href="#split"/></svg><span class="t">拆分体 (13)</span></div>
            <div class="row"><span class="lead2"></span><span class="ck"><svg><use href="#tick"/></svg></span><svg class="ic2"><use href="#del"/></svg><span class="t">删除体 (14)</span></div>
            <div class="row"><span class="lead2"></span><span class="ck"><svg><use href="#tick"/></svg></span><svg class="ic2"><use href="#hole"/></svg><span class="t">沉头孔 (15)</span></div>
            <div class="row"><span class="lead2"></span><span class="ck"><svg><use href="#tick"/></svg></span><svg class="ic2"><use href="#hole"/></svg><span class="t">埋头孔 (16)</span></div>
            <div class="row"><span class="lead2"></span><span class="ck"><svg><use href="#tick"/></svg></span><svg class="ic2"><use href="#hole"/></svg><span class="t">埋头孔 (17)</span></div>
          </div>
          <div class="vscroll"><i class="up"></i><div class="vthumb"><em></em></div><i class="dn"></i></div>
        </div>
        <div class="hscroll"><i class="lf"></i><div class="hthumb"><em></em></div><i class="rt"></i></div>
      </div>
      <div class="splitter"></div>
      <div class="acc"><span>相依性</span><svg class="chev"><use href="#chev"/></svg></div>
      <div class="acc"><span>细节</span><svg class="chev"><use href="#chev"/></svg></div>
      <div class="acc"><span>预览</span><svg class="chev"><use href="#chev"/></svg></div>
    </section>
    <section class="viewport">
      <svg class="model" viewBox="0 0 930 1290">
        <defs>
          <linearGradient id="cone" gradientUnits="userSpaceOnUse" x1="340" y1="520" x2="680" y2="700">
            <stop offset="0" stop-color="#e48c00"/><stop offset=".32" stop-color="#ffa80c"/><stop offset=".62" stop-color="#ef9200"/><stop offset="1" stop-color="#b87000"/>
          </linearGradient>
          <linearGradient id="plate" gradientUnits="userSpaceOnUse" x1="60" y1="1000" x2="420" y2="1200">
            <stop offset="0" stop-color="#d98600"/><stop offset=".5" stop-color="#f79600"/><stop offset="1" stop-color="#d08000"/>
          </linearGradient>
        </defs>
        <path d="M55 1050C150 1130 260 1200 385 1245L383 1234C260 1190 150 1120 57 1040z" fill="#9c6000" stroke="#333"/>
        <path d="M100 958L425 1150 385 1238C260 1195 150 1125 55 1050z" fill="url(#plate)" stroke="#443" stroke-width="1.500"/>
        <path d="M425 1150L507 1127 462 1225 385 1245z" fill="#a86500" stroke="#443" stroke-width="1.500"/>
        <path d="M100 958L162 944 465 1120 475 1090 507 1127 425 1150z" fill="#f4a000" stroke="#443" stroke-width="1.500"/>
        <path d="M148 980C230 1060 340 1115 455 1135" fill="none" stroke="#ffc01a" stroke-width="7"/>
        <path d="M148 965L218 850 233 828 298 725 313 703 380 598 395 570 462 470 478 440 545 338 560 308 658 158 815 235 778 335 755 340 767 362 718 478 700 482 707 505 662 615 645 622 650 645 607 755 590 765 593 790 550 900 533 906 537 930 465 1120C340 1100 230 1050 148 965z" fill="url(#cone)" stroke="#443" stroke-width="1.500"/>
        <g class="groove">
          <path d="M640 245C636 232 650 234 656 240 690 285 730 315 778 335L757 340C705 318 665 290 640 245z"/>
          <path d="M545 338C590 405 650 450 718 478L700 482C625 455 575 420 548 372 540 358 540 345 545 338z"/>
          <path d="M462 470C515 540 585 590 662 615L645 622C560 595 505 555 466 505 458 490 458 478 462 470z"/>
          <path d="M380 598C440 670 520 725 607 755L590 765C500 735 425 685 385 630 377 615 376 605 380 598z"/>
          <path d="M298 725C365 805 450 860 550 900L533 906C440 875 355 825 304 760 296 745 294 733 298 725z"/>
          <path d="M218 850C260 910 310 955 366 988 372 998 360 1002 348 998 300 975 250 935 222 890 215 875 214 860 218 850z"/>
        </g>
        <g class="glow">
          <path d="M650 252C680 292 715 317 752 335"/>
          <path d="M552 362C590 412 640 447 692 472"/>
          <path d="M470 492C515 547 575 587 637 612"/>
          <path d="M388 618C440 678 515 722 582 752"/>
          <path d="M306 748C365 812 445 857 527 892"/>
          <path d="M228 872C265 927 310 967 350 990"/>
        </g>
        <ellipse cx="737" cy="197" rx="85" ry="30" transform="rotate(26 737 197)" fill="#ffb020" stroke="#443"/>
        <ellipse cx="750" cy="175" rx="64" ry="26" transform="rotate(26 750 175)" fill="#b87000" stroke="#443"/>
        <g class="thread">
          <ellipse cx="752" cy="165" rx="70" ry="20" transform="rotate(25 752 165)"/>
          <ellipse cx="757" cy="151" rx="72" ry="21" transform="rotate(25 757 151)"/>
          <ellipse cx="763" cy="137" rx="74" ry="21" transform="rotate(25 763 137)"/>
          <ellipse cx="769" cy="123" rx="76" ry="22" transform="rotate(25 769 123)"/>
          <ellipse cx="776" cy="109" rx="78" ry="23" transform="rotate(25 776 109)"/>
          <ellipse cx="783" cy="95" rx="78" ry="24" transform="rotate(25 783 95)"/>
        </g>
        <ellipse cx="790" cy="80" rx="73" ry="29" transform="rotate(25 790 80)" fill="#fba810" stroke="#333" stroke-width="2"/>
        <ellipse cx="802" cy="76" rx="36" ry="14" transform="rotate(25 802 76)" fill="none" stroke="#7a5010" stroke-width="2"/>
        <path d="M797 80L790 122" stroke="#d8dce0" stroke-width="6"/>
      </svg>
      <svg class="triad" viewBox="0 0 100 100">
        <path d="M43 40l17 10-12 17-16-12z" fill="#d8d8d8" stroke="#a8a8a8" stroke-width="1.500"/>
        <path d="M46 43l11 7-10 13-11-8z" fill="#e2e2e2" stroke="#c4c4c4"/>
        <path d="M38 52L47 33" stroke="#c89090" stroke-width="1.500"/><path d="M44 36l7-9-1 12z" fill="#b02828"/>
        <path d="M29 58h-3" stroke="#70a878" stroke-width="2"/><circle cx="28" cy="58" r="2" fill="#2a8a48"/>
        <path d="M41 59L55 66" stroke="#80a0e8" stroke-width="1.500"/><path d="M52 64l10 7-12-2z" fill="#1040e0"/>
        <text x="49" y="29" class="ax ax-x">X</text><text x="21" y="65" class="ax ax-y">Y</text><text x="62" y="80" class="ax ax-z">Z</text>
      </svg>
      <div class="meter"><i class="off"></i><i class="off"></i><i class="off"></i><i class="off"></i><i class="m1"></i><i class="m1"></i><i class="m2"></i><i class="m2"></i><i class="m2"></i><i class="m2"></i><i class="m3"></i><i class="m3"></i><i class="m4"></i><i class="m4"></i><i class="m5"></i><i class="m5"></i></div>
    </section>
  </main>

  <footer class="status">选择对象并使用 <b>MB3</b>，或者双击某一对象</footer>
  <div class="taskbar">
    <i class="orb"></i><i class="tk tk1"></i><i class="tk tk2"></i><i class="tk tk3"></i><i class="tk tk4"></i>
    <span class="clock-tip"></span>
  </div>

  <div class="topshadow"></div>
  <svg class="watermark" viewBox="0 0 948 348">
    <path d="M172 42L298 112V260L172 330 45 260V112z" fill="#6ba0d6" stroke="#f4f6f8" stroke-width="8"/>
    <path d="M172 42L298 112V260L172 330C130 310 110 280 108 232L172 262 228 232V150C215 90 190 60 172 42z" fill="#70c4ec"/>
    <path d="M172 100L245 145V232L172 272 100 232V145z" fill="none" stroke="#f4f6f8" stroke-width="8"/>
    <path d="M172 122L226 155 172 186 118 155z" fill="#6ba0d6"/><path d="M118 158L170 188V248L118 218z" fill="#6ba0d6"/><path d="M174 188L226 158V218L174 248z" fill="#70c4ec"/>
    <path d="M45 210C70 150 110 120 130 115M172 42C230 70 240 130 240 150M298 190C250 250 230 250 190 265" fill="none" stroke="#f4f6f8" stroke-width="2"/>
    <text x="328" y="232" class="wm-big" textLength="598">3D世界网</text>
    <text x="335" y="272" class="wm-small" textLength="580" lengthAdjust="spacingAndGlyphs">WWW.3DSJW.COM</text>
  </svg>
  <div class="ime">
    <b class="ime-s">S</b>
    <span class="ime-bar"><span class="ime-zh">中</span><i class="moon"></i><span class="ime-p">°,</span><i class="kbd"></i><i class="ime20">20</i><i class="shirt"></i><i class="wrench"></i></span>
  </div>
</div>
</body>
</html>
```
FILE: styles.css
```css
*{box-sizing:border-box}
html,body{margin:0;height:100%;overflow:hidden}
body{font-family:"Noto Sans CJK SC","Liberation Sans",sans-serif;font-size:11px;color:#1a1a1a;background:#fff}
i{display:block;font-style:normal}
.defs{position:absolute}
svg{display:block;flex:none;overflow:hidden}
.i16{width:16px;height:16px}.i18{width:18px;height:18px}.i20{width:20px;height:20px}.i24{width:24px;height:24px}.i32{width:32px;height:32px}.i32w{width:38px;height:32px}
.dn{width:0;height:0;border-left:3.5px solid transparent;border-right:3.5px solid transparent;border-top:4px solid #222;flex:none}
.up{width:0;height:0;border-left:4px solid transparent;border-right:4px solid transparent;border-bottom:4px solid #bbb;flex:none}
.more-dn{width:8px;height:6px;border-top:1.500px solid #222;position:relative;flex:none}
.more-dn::after{content:"";position:absolute;left:0;top:2px;border-left:4px solid transparent;border-right:4px solid transparent;border-top:4px solid #222}

.app{position:relative;width:1366px;height:736px;display:flex;flex-direction:column;overflow:hidden}

/* title bar */
.titlebar{height:26px;display:flex;align-items:center;position:relative;background:#fff;flex:none}
.qat{display:flex;align-items:center;height:26px}
.nx{font:bold 23px/26px "Liberation Sans",sans-serif;color:#7d96a8;margin-left:4px;width:33px}
.qsep{width:1px;height:18px;background:#d0d0d0;flex:none}
.nxsep{margin-left:4px}
.m-a{margin-left:11px}.s1{margin-left:5px}.m-b{margin-left:7px}.m-c{margin-left:7px}.m-d{margin-left:6px}
.s2{margin-left:6px}.m-e{margin-left:6px}.m-f{margin-left:8px}.m-g{margin-left:6px}.s3{margin-left:6px}
.m-h{margin-left:5px}.m-i{margin-left:5px}.s4{margin-left:5px}.m-j{margin-left:6px}.s5{margin-left:5px}
.m-k{margin-left:7px}.qtext{font-size:12px;margin-left:3px;width:24px}.m-l{margin-left:3px}.m-m{margin-left:4px}
.doc-title{position:absolute;left:684px;top:3px;font-size:12px;line-height:20px;white-space:nowrap;letter-spacing:.55px}
.brand{position:absolute;left:1215px;top:6px;font:bold 12px/16px "Liberation Sans",sans-serif;color:#2a9a96;letter-spacing:.9px}
.winbtns{position:absolute;left:1300px;top:0;display:flex;align-items:center;height:26px}
.w-min{width:9px;height:2px;background:#333;margin:10px 13px 0 2px}
.w-rest{width:9px;height:8px;border:1.500px solid #333;position:relative;margin:3px 13px 0 0;background:#fff0}
.w-rest::after{content:"";position:absolute;left:2px;top:-5.500px;width:9px;height:7px;border:1.500px solid #333;clip-path:polygon(0 0,100% 0,100% 100%,50% 100%,50% 45%,0 45%)}
.w-x{font:15px/20px "DejaVu Sans",sans-serif;color:#333}

/* tabs */
.tabs{height:28px;background:#c6d6d4;display:flex;align-items:center;flex:none;position:relative;font-size:13px}
.tab{height:28px;line-height:28px;padding:0 13px;white-space:nowrap;min-width:52px;text-align:center}
.tab.file{width:81px;padding:0;background:#5a8880;color:#fff;font-size:12.500px}
.tab.first{margin-left:2px}
.tab.on{background:#fff;color:#3a96c8;box-shadow:0 -1px 0 #aaa}
.tabs-right{position:absolute;left:1090px;top:0;height:28px;display:flex;align-items:center}
.search{width:125px;height:20px;background:#fff;border:1px solid #aaa;display:flex;align-items:center;justify-content:space-between;padding:0 2px 0 1px;font-size:11px}
.tr-a{margin-left:11px}
.tr-chev{width:9px;height:9px;border-left:1.500px solid #333;border-top:1.500px solid #333;transform:rotate(45deg);margin:4px 0 0 13.500px}
.help{width:14px;height:14px;border-radius:50%;background:#3a6fd0;color:#fff;font:bold 11px/14px "Liberation Sans",sans-serif;text-align:center;margin-left:14.500px}
.tabs-right .w-min{margin:10px 12px 0 10px}
.tabs-right .w-rest{margin-right:11px}

/* ribbon */
.ribbon{height:94px;display:flex;flex:none;background:#fff;border-bottom:2px solid #e2e2e2}
.grp{display:flex;flex-direction:column;height:88px;margin-top:1px;position:relative;border-right:1px solid #ddd;flex:none}
.body{display:flex;height:70px;flex:none}
.foot{height:14px;margin-top:6px;position:relative;text-align:center;color:#3a96c8;font-size:11px;line-height:14px}
.foot .dn{position:absolute;right:7px;top:5px}
.foot-o{text-align:left;padding-left:78px}
.foot-s{text-align:left;padding-left:24px}
.foot-v{text-align:left;padding-left:240px}
.g1{width:50px}.g2{width:196px}.g3{width:532px}.g4{width:89px}.g5{width:316px}.g6{flex:1;border-right:0}
.g2 .body{padding-left:7px}.g3 .body{padding-left:9px}.g4 .body{padding-left:7px}.g5 .body{padding-left:8px}
.big{display:flex;flex-direction:column;align-items:center;padding-top:4px;flex:none}
.big span{height:16px;line-height:16px;margin-top:3px;white-space:nowrap;font-size:11px}
.big .morebox + span{margin-top:2px}
.big .dn{margin-top:5px}
.w49{width:49px}.w40{width:40px}.w60{width:60px}.w52{width:52px}.w74{width:74px}
.ml1{margin-left:1px}.ml2{margin-left:2px}.ml3{margin-left:3px}.ml5{margin-left:5px}.ml8{margin-left:8px}
.grid{display:grid;grid-auto-rows:22.500px;justify-items:center;align-items:center;flex:none}
.c25{grid-template-columns:repeat(3,25px)}
.c26{grid-template-columns:repeat(2,26px);margin-left:13px}
.morebox{width:37px;height:33px;border:1px solid #eee;border-radius:3px;display:flex;align-items:center;justify-content:center}
.listbox{width:115px;height:66px;border:1px solid #ccc;margin:4px 0 0 10px;flex:none}
.listbox .li:first-child{margin-top:-2px}
.li{height:22px;display:flex;align-items:center;gap:3px;white-space:nowrap;font-size:11px;padding-left:3px}
.lscroll{width:16px;display:flex;flex-direction:column;align-items:center;padding-top:13px;gap:17px;flex:none}
.layers{width:80px;margin:5px 0 0 12px;flex:none}
.layers .li{padding-left:1px;margin-top:3px;height:19px}
.combo{height:20px;border:1px solid #999;background:#fff;display:flex;align-items:center;justify-content:space-between;padding:0 6px 0 2px;font-size:11px;flex:none}
.small{width:49px;margin-bottom:3px}
.png{height:32px;display:flex;flex-direction:column;align-items:center}
.png b{font:bold 14px/16px "Liberation Sans",sans-serif;color:#5a4a80}
.png-arrow{width:0;height:0;border-left:8px solid #b8389c;border-top:7px solid transparent;border-bottom:7px solid transparent;margin:0 0 0 10px}
.vlist{width:85px;margin:1px 0 0 7px;flex:none}
.vlist .li{height:21.500px;padding-left:3px}
.vlist .li.act{width:60px;background:#c7d8d6;border:1px solid #a8c4c0;height:22px}

/* toolbar */
.toolbar{height:32px;display:flex;align-items:center;flex:none;background:#fff;border-bottom:2px solid #aaa;position:relative}
.menu-ic{margin-left:9px}
.menu{margin:0 4px;font-size:11px;white-space:nowrap;width:38px}
.tsep{width:1px;height:22px;background:#ddd;flex:none}
.t1{margin:0 13px 0 6px}
.c1{width:133px}.c2{width:140px;margin-left:8px}
.tb{width:24px;height:24px;display:flex;align-items:center;justify-content:center;flex:none;border:1px solid transparent}
.tb.on{background:#c7d8d6;border-color:#a8c4c0}
.gn1{margin-left:-1px}.g1p{margin-left:1px}.g1h{margin-left:1.500px}.g2p{margin-left:2px}.g2h{margin-left:2.500px}.g3p{margin-left:3px}.g3h{margin-left:3.500px}.g4h{margin-left:4.500px}.g7{margin-left:8px}
.t2{margin:0 8px 0 7px}
.t3{margin-left:8.500px}
.t-end{position:absolute;right:5px;top:20px}

/* main */
.main{flex:1;min-height:0;display:flex;position:relative}
.rail{width:32px;background:#d9d9d9;border-right:1px solid #a9a9a9;flex:none;display:flex;flex-direction:column;align-items:center;position:relative}
.r-gear{margin-top:4px}
.r-a{margin-top:31px}.r-b{margin-top:18px}
.r-active{width:30px;height:44px;margin-top:8px;align-self:flex-start;margin-left:2px;background:#fff;border:1px solid #bbb;border-right:0;display:flex;align-items:center;padding-left:4px;flex:none}
.r-c{margin-top:8px}
.r-info{width:24px;height:24px;margin-top:33px;border-radius:50%;background:#1d6fd0;color:#fff;font:bold 15px/21px "Liberation Serif",serif;text-align:center;border-top:3px solid #5aa0e8;flex:none}
.r-d{margin-top:27px}.r-e{margin-top:30px}.r-f{margin-top:20px}.r-g{margin-top:16px}
.r-wave{width:26px;height:6px;border-top:1.500px solid #333;border-radius:50% 50% 0 0;margin-top:7px;flex:none}
.r-u1{margin-top:6px}.r-u2{margin-top:10px}.r-d1{margin-top:13px}.r-d2{margin-top:11px}

.nav{width:187px;background:#f9f9f9;flex:none;padding:0 9px 0 6px;display:flex;flex-direction:column;border-right:1px solid #bbb}
.nav-head{height:28px;display:flex;align-items:center;justify-content:space-between;padding:0 7px 0 4px;font-size:11px;flex:none}
.maxbox{width:11px;height:11px;border:1px solid #222;border-top-width:2px}
.frame{width:172px;border:1px solid #ddd;background:#fff;flex:none;display:flex;flex-direction:column;padding:1px}
.colhead{height:21px;background:#efefef;display:flex;align-items:center;padding-left:6px;font-size:12px;position:relative;flex:none;border-bottom:1px solid #ddd}
.sort{margin-left:12px;width:0;height:0;border-left:4.500px solid transparent;border-right:4.500px solid transparent;border-bottom:4.500px solid #222}
.cend{position:absolute;right:0;top:0;width:17px;height:100%;background:#bbb}
.treewrap{display:flex;height:373px;flex:none}
.tree{width:153px;overflow:hidden;flex:none}
.row{height:20px;display:flex;align-items:center;border-bottom:1px solid #efefef;white-space:nowrap;font-size:12px;background:#fff;overflow:hidden}
.row:nth-child(n+6){background:#fbfbfb}
.t{margin-left:2px}
.dim{color:#a3a3a3}
.lead{width:18px;height:20px;position:relative;flex:none;background:repeating-linear-gradient(to bottom,#888 0 1px,transparent 1px 2px) 9px 0/1px 100% no-repeat,repeating-linear-gradient(to right,#888 0 1px,transparent 1px 2px) 9px 10px/9px 1px no-repeat}
.lead.top{background-size:1px 50%,9px 1px;background-position:9px 10px,9px 10px}
.lead.end{background-size:1px 50%,9px 1px;background-position:9px 0,9px 10px}
.tw{position:absolute;left:6px;top:6px;width:8px;height:8px;background:#fff;border:1px solid #bbb;font:bold 9px/6px "Liberation Sans",sans-serif;text-align:center;color:#111}
.ic{width:18px;height:18px;flex:none}
.ck0{width:13px;height:13px;margin:0 2px;flex:none}
.ck0 + .ic{margin-right:-1px}
.lead2{width:40px;height:20px;flex:none;background:repeating-linear-gradient(to bottom,#888 0 1px,transparent 1px 2px) 28px 0/1px 100% no-repeat,repeating-linear-gradient(to right,#888 0 1px,transparent 1px 2px) 28px 10px/12px 1px no-repeat}
.ck{width:12px;height:12px;border:1.300px solid #111;background:#fff;flex:none;display:flex;align-items:center;justify-content:center}
.ck svg{width:11px;height:11px}
.ic2{width:17px;height:17px;margin-left:2px;flex:none}
.vscroll{width:16px;background:#f2f2f2;display:flex;flex-direction:column;align-items:center;padding-top:8px;flex:none}
.vscroll .up{border-bottom-color:#222}
.vthumb{width:15px;height:302px;margin:6px 0 0;background:linear-gradient(to right,#e8e8e8,#cfcfcf);border:1px solid #aaa;border-radius:2px;display:flex;align-items:center;justify-content:center;flex:none}
.vthumb em{width:7px;height:5px;border-top:1px solid #555;border-bottom:1px solid #555}
.vscroll .dn{margin-top:42px}
.hscroll{height:18px;background:#f2f2f2;display:flex;align-items:center;padding-left:8px;flex:none}
.lf{width:0;height:0;border-top:4px solid transparent;border-bottom:4px solid transparent;border-right:4px solid #333;flex:none}
.rt{width:0;height:0;border-top:4px solid transparent;border-bottom:4px solid transparent;border-left:4px solid #333;flex:none;margin-left:80px}
.hthumb{width:41px;height:16px;margin-left:6px;background:linear-gradient(#eee,#ccc);border:1px solid #aaa;border-radius:2px;display:flex;align-items:center;justify-content:center}
.hthumb em{width:6px;height:6px;border-left:1px solid #555;border-right:1px solid #555}
.splitter{width:172px;height:5px;background:#ddd;border:1px solid #bbb;flex:none}
.acc{width:172px;height:24px;display:flex;align-items:center;justify-content:space-between;padding:0 5px 0 7px;color:#3a96c8;font-size:12px;border-bottom:2px solid #d5d5d5;flex:none}
.chev{width:12px;height:10px;margin-top:-4px}

.viewport{flex:1;position:relative;background:linear-gradient(to bottom,#b5b7b8 0,#d7d8da 50%,#e5e6e8 78%,#e6e7e9 100%);overflow:hidden}
.model{position:absolute;left:311px;top:80px;width:310px;height:430px;overflow:visible}
.groove path{fill:#c47800;stroke:#2e2a1c;stroke-width:1.800}
.glow path{fill:none;stroke:#ffc61a;stroke-width:8;stroke-linecap:round}
.thread ellipse{fill:#fca90f;stroke:#2a2a1c;stroke-width:5}
.triad{position:absolute;left:11px;top:420px;width:100px;height:100px}
.ax{font:11px "Liberation Sans",sans-serif}
.ax-x{fill:#c03838}.ax-y{fill:#4a9a60}.ax-z{fill:#1048e8}
.meter{position:absolute;right:0;top:253px;width:10px;height:58px;background:#4b4e5a;border-radius:3px 0 0 3px;padding:4px 1px 0 3px;display:flex;flex-direction:column;gap:1.500px}
.meter i{height:2px;background:#fff}
.meter .off{background:#2e3038}.m1{background:#f09040!important}.m2{background:#f0e040!important}.m3{background:#c0e840!important}.m4{background:#70e070!important}.m5{background:#40e0c0!important}

.status{height:22px;line-height:20px;border-top:1px solid #aaa;background:#fff;padding-left:3px;font-size:11px;flex:none;white-space:nowrap;letter-spacing:.1px}
.status b{font-weight:700}
.taskbar{height:8px;background:#111;flex:none;position:relative;display:flex;overflow:hidden}
.tk{height:10px;background:linear-gradient(#aab0b6,#555);border-radius:3px 3px 0 0;margin-top:1px;flex:none}
.orb{width:30px;height:14px;border-radius:50%;border:1px solid #9cc;margin:2px 0 0 12px;background:#234;flex:none}
.tk1{width:58px;margin-left:18px}.tk2{width:53px;margin-left:4px}.tk3{width:58px;margin-left:9px}.tk4{width:57px;margin-left:4px}
.clock-tip{position:absolute;right:2px;top:0;width:18px;height:8px;background:#555;border:1px solid #888}

.topshadow{position:absolute;left:975px;top:0;width:275px;height:3px;background:linear-gradient(#8a8a8a,#fff0);border-radius:0 0 4px 4px}
.watermark{position:absolute;left:1050px;top:620px;width:316px;height:116px;overflow:visible}
.wm-big{font:700 146px "Noto Sans CJK SC",sans-serif;fill:#70c4ec;stroke:#f4f6f8;stroke-width:6;paint-order:stroke}
.wm-small{font:400 36px "Liberation Sans",sans-serif;fill:#70c4ec;stroke:#fff;stroke-width:3;paint-order:stroke}
.ime{position:absolute;left:1135px;top:702px;width:184px;height:26px;display:flex;align-items:flex-end}
.ime-s{width:24px;height:26px;background:#f0501c;border-left:2px solid #777;border-top:2px solid #777;color:#fff;font:bold 19px/22px "Liberation Sans",sans-serif;text-align:center;flex:none;border-radius:3px}
.ime-bar{flex:1;height:19px;background:#fff;border:1px solid #b8c8d4;border-top-color:#d4dee6;display:flex;align-items:center;color:#e81010;font-size:13px;font-weight:700;padding-left:8px}
.ime-zh{line-height:16px}
.moon{width:9px;height:10px;border-radius:50%;box-shadow:inset -4px -2px 0 #e81010;margin-left:12px}
.ime-p{font-size:11px;margin-left:12px;line-height:12px;letter-spacing:-1px}
.kbd{width:16px;height:11px;background:#e81010;border-radius:2px;margin-left:13px}
.ime20{width:17px;height:9px;background:#fff;border:1px solid #e81010;color:#e81010;font:bold 7px/7px "Liberation Sans",sans-serif;text-align:center;margin-left:9px}
.shirt{width:11px;height:12px;background:#e81010;margin-left:6px;clip-path:polygon(0 15%,30% 0,70% 0,100% 15%,100% 40%,80% 40%,80% 100%,20% 100%,20% 40%,0 40%)}
.wrench{width:13px;height:3px;background:#e81010;transform:rotate(-45deg);margin-left:8px;border-radius:2px}
```
